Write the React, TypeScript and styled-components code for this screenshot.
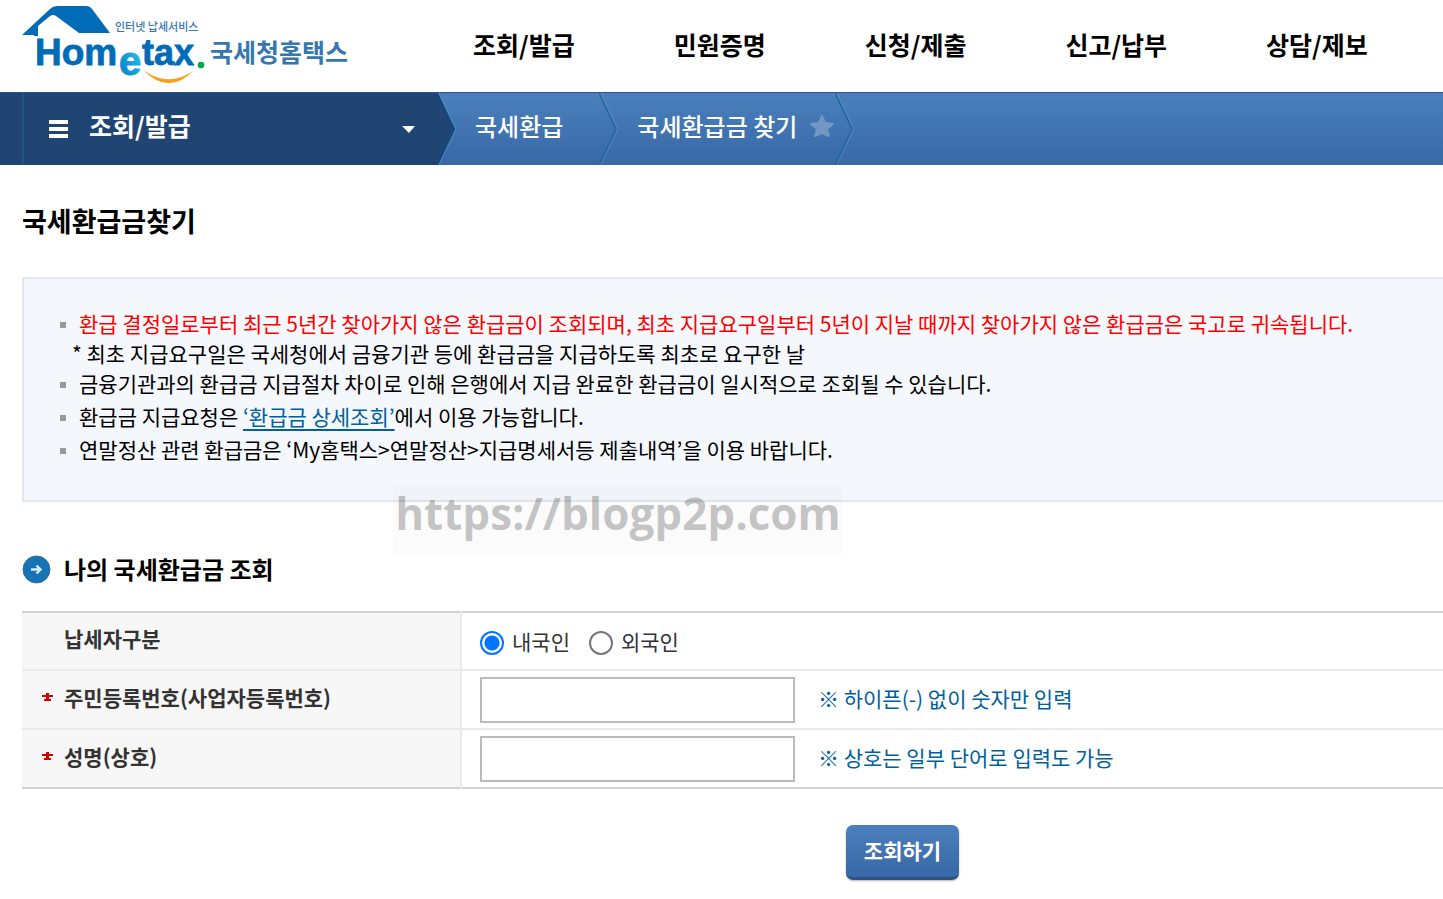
import React from "react";
import styled, { createGlobalStyle } from "styled-components";

const Global = createGlobalStyle`
  *, *::before, *::after { box-sizing: border-box; }
  html, body { margin: 0; background: #fff; }
  body {
    font-family: "Noto Sans CJK KR", sans-serif;
    font-size: 21px;
    line-height: 30px;
    color: #000;
    overflow-x: hidden;
  }
  h1, h2, ul, p { margin: 0; padding: 0; font-weight: inherit; }
  button, input { font-family: inherit; }
`;

const Header = styled.header`
  display: flex;
  height: 92px;
  padding-left: 22px;
`;

const LogoLink = styled.a`
  display: block;
  flex: none;
  width: 428px;
  height: 92px;
`;

const MainNav = styled.nav`
  display: flex;
  flex: 1;
  gap: 99px;
  padding: 24px 0 0 23px;
`;

const NavLink = styled.a`
  color: #000;
  font-size: 25px;
  font-weight: 700;
  line-height: 40px;
  white-space: nowrap;
  text-decoration: none;
`;

const PathBar = styled.nav`
  display: flex;
  height: 73px;
  padding-left: 22px;
  border-top: 1px solid #2a568c;
  background: linear-gradient(90deg, #204573 22px, transparent 22px),
    linear-gradient(#4a80bd, #3868a6);
`;

const MenuToggle = styled.button`
  display: flex;
  align-items: center;
  flex: none;
  width: 415px;
  padding: 0 21px 0 25px;
  border: 0;
  border-left: 2px solid #25518a;
  background: #204573;
  color: #fff;
  font-size: 25px;
  font-weight: 700;
  line-height: 40px;
  text-align: left;
`;

const ToggleText = styled.span`
  flex: 1;
  padding: 0 0 8px 21px;
`;

const Crumb = styled.a<{ $current?: boolean }>`
  display: flex;
  align-items: center;
  gap: 12px;
  padding: 0 ${(p) => (p.$current ? 0 : 36)}px 6px 19px;
  color: #fff;
  font-size: 24px;
  font-weight: 500;
  line-height: 36px;
  white-space: nowrap;
  text-decoration: none;
`;

const ChevronSvg = styled.svg`
  flex: none;
  display: block;
  width: 19px;
  height: 72px;
`;

const Main = styled.main`
  padding: 36px 0 18px 22px;
`;

const PageTitle = styled.h1`
  font-size: 27px;
  font-weight: 700;
  line-height: 40px;
`;

const Notice = styled.section`
  position: relative;
  margin-top: 36px;
  height: 225px;
  padding: 29px 0 0 36px;
  border: 2px solid #e0e7ef;
  border-right: 0;
  background: #f4f7fc;
`;

const NoticeList = styled.ul`
  list-style: none;
`;

const NoticeItem = styled.li<{ $alert?: boolean }>`
  position: relative;
  padding: 0 0 3px 19px;
  line-height: 30px;
  white-space: nowrap;
  color: ${(p) => (p.$alert ? "#f00" : "#000")};
  &::before {
    content: "";
    position: absolute;
    left: 0;
    top: 14px;
    width: 6px;
    height: 6px;
    background: #999;
  }
`;

const NoticeSub = styled.p`
  color: #000;
  margin: 0 0 -3px -7px;
`;

const TextLink = styled.a`
  color: #00609c;
  text-decoration: underline;
  text-underline-offset: 4px;
`;

const Watermark = styled.span`
  position: absolute;
  left: 369px;
  top: 206px;
  width: 450px;
  height: 70px;
  background: rgba(0, 0, 0, 0.015);
  color: rgba(0, 0, 0, 0.23);
  font-family: "Open Sans", sans-serif;
  font-size: 44px;
  font-weight: 700;
  line-height: 56px;
  text-align: center;
  white-space: nowrap;
`;

const SectionTitle = styled.h2`
  display: flex;
  align-items: center;
  gap: 13px;
  margin-top: 47px;
  font-size: 24px;
  font-weight: 700;
  line-height: 40px;
`;

const FormTable = styled.table`
  width: 100%;
  margin-top: 22px;
  border-collapse: collapse;
  border-top: 2px solid #d2d2d2;
  border-bottom: 2px solid #d2d2d2;
`;

const Row = styled.tr`
  height: 58px;
  & + & {
    height: 59px;
    border-top: 2px solid #ebebeb;
  }
`;

const LabelCell = styled.th`
  position: relative;
  width: 439px;
  padding: 0 0 6px 42px;
  border-right: 2px solid #ebebeb;
  background: #f7f7f7;
  color: #333;
  font-weight: 700;
  text-align: left;
`;

const RequiredSvg = styled.svg`
  position: absolute;
  left: 20px;
  top: 21px;
`;

const FieldCell = styled.td`
  padding: 0 0 0 18px;
`;

const FieldLine = styled.div`
  display: flex;
  align-items: center;
`;

const RadioLabel = styled.label`
  display: flex;
  align-items: center;
  gap: 8px;
  margin-right: 19px;
  color: #333;
`;

const Radio = styled.input`
  appearance: none;
  width: 24px;
  height: 24px;
  margin: 4px 0 0;
  border: 2px solid #767676;
  border-radius: 50%;
  background: #fff;
  &:checked {
    border-color: #0075ff;
    background: radial-gradient(circle, #0075ff 7px, #fff 8px);
  }
`;

const TextInput = styled.input`
  width: 315px;
  height: 46px;
  padding: 0 10px;
  border: 2px solid #bbb;
  background: #fff;
  font-size: 21px;
`;

const Hint = styled.span`
  margin-left: 23px;
  padding-bottom: 3px;
  color: #00609c;
`;

const Actions = styled.div`
  display: flex;
  justify-content: center;
  margin-top: 36px;
  padding-left: 340px;
`;

const SubmitButton = styled.button`
  width: 113px;
  height: 55px;
  padding: 0 0 2px;
  border: 0;
  border-bottom: 3px solid #2a5384;
  border-radius: 7px;
  background: linear-gradient(#4c7fbd, #3868a6);
  box-shadow: 0 1px 2px rgba(0, 0, 0, 0.3);
  color: #fff;
  font-size: 21px;
  font-weight: 700;
`;

const Logo = () => (
  <svg width="330" height="92" viewBox="22 0 330 92" role="img" aria-label="Hometax">
    <defs>
      <linearGradient id="e" x1="1" y1="0" x2="0" y2="1">
        <stop offset="0" stopColor="#2cc8f3" />
        <stop offset="1" stopColor="#0079c4" />
      </linearGradient>
    </defs>
    <path d="M22 35L50 9Q53 6 58 6H86Q90 6 92 9L110 33H79L56 16Q53 14 50 16L38 26V36H34V35Z" fill="#006cb8" />
    <g fontFamily="Liberation Sans, sans-serif" fontWeight="700" fill="#006cb8" stroke="#006cb8" strokeWidth=".8">
      <text x="35" y="65" fontSize="37">Hom</text>
      <text x="142" y="65" fontSize="36">tax</text>
    </g>
    <text x="119" y="75" fontFamily="Liberation Sans, sans-serif" fontWeight="700" fontSize="40" fill="url(#e)" stroke="url(#e)">e</text>
    <circle cx="201" cy="65" r="3.300" fill="#00a650" />
    <path d="M143 70Q168 88 193 71Q169 96 143 70Z" fill="#f9a01b" />
    <g fontFamily="Noto Sans CJK KR, sans-serif" fill="#3677b0">
      <text x="115" y="31" fontSize="11" fontWeight="500">인터넷 납세서비스</text>
      <text x="210" y="62" fontSize="25" fontWeight="700">국세청홈택스</text>
    </g>
  </svg>
);

const Chevron = ({ filled }: { filled?: boolean }) => (
  <ChevronSvg viewBox="0 0 19 72" aria-hidden="true">
    {filled && <path d="M0 0L17 36L0 72Z" fill="#204573" />}
    <path d="M2 0L19 36L2 72" fill="none" stroke="#6c9bcd" strokeOpacity=".5" />
    <path d="M0 0L17 36L0 72" fill="none" stroke={filled ? "#0d4a7d" : "#23689f"} strokeWidth={filled ? 2 : 1.5} />
  </ChevronSvg>
);

const Required = () => (
  <RequiredSvg width="11" height="11" viewBox="0 0 11 11" aria-hidden="true">
    <path d="M4 1H7V3H11V5H7V7H9V9H2V7H4V5H0V3H4Z" fill="#d40000" />
  </RequiredSvg>
);

const menus = ["조회/발급", "민원증명", "신청/제출", "신고/납부", "상담/제보"];

export default function App() {
  return (
    <>
      <Global />
      <Header>
        <LogoLink href="#"><Logo /></LogoLink>
        <MainNav>
          {menus.map((m) => <NavLink href="#" key={m}>{m}</NavLink>)}
        </MainNav>
      </Header>
      <PathBar>
        <MenuToggle type="button">
          <svg width="19" height="20" viewBox="0 0 19 20" aria-hidden="true">
            <path d="M0 1H19V5H0ZM0 8H19V12H0ZM0 15H19V19H0Z" fill="#fff" />
          </svg>
          <ToggleText>조회/발급</ToggleText>
          <svg width="15" height="10" viewBox="0 0 15 10" aria-hidden="true">
            <path d="M1 2H14L8 9Z" fill="#fff" />
          </svg>
        </MenuToggle>
        <Chevron filled />
        <Crumb href="#">국세환급</Crumb>
        <Chevron />
        <Crumb href="#" $current>
          국세환급금 찾기
          <svg width="26" height="24" viewBox="0 0 26 24" aria-hidden="true">
            <path d="M13 2L16 9L24 10L18 15L20 22L13 19L6 22L8 15L2 10L10 9Z" fill="#7297c2" stroke="#7297c2" strokeWidth="2" strokeLinejoin="round" />
          </svg>
        </Crumb>
        <Chevron />
      </PathBar>
      <Main>
        <PageTitle>국세환급금찾기</PageTitle>
        <Notice>
          <NoticeList>
            <NoticeItem $alert>
              환급 결정일로부터 최근 5년간 찾아가지 않은 환급금이 조회되며, 최초 지급요구일부터 5년이 지날 때까지 찾아가지 않은 환급금은 국고로 귀속됩니다.
              <NoticeSub>* 최초 지급요구일은 국세청에서 금융기관 등에 환급금을 지급하도록 최초로 요구한 날</NoticeSub>
            </NoticeItem>
            <NoticeItem>금융기관과의 환급금 지급절차 차이로 인해 은행에서 지급 완료한 환급금이 일시적으로 조회될 수 있습니다.</NoticeItem>
            <NoticeItem>환급금 지급요청은 <TextLink href="#">‘환급금 상세조회’</TextLink>에서 이용 가능합니다.</NoticeItem>
            <NoticeItem>연말정산 관련 환급금은 ‘My홈택스&gt;연말정산&gt;지급명세서등 제출내역’을 이용 바랍니다.</NoticeItem>
          </NoticeList>
          <Watermark>https://blogp2p.com</Watermark>
        </Notice>
        <SectionTitle>
          <svg width="29" height="29" viewBox="0 0 29 29" aria-hidden="true">
            <circle cx="14.500" cy="14.500" r="13.500" fill="#1673b5" stroke="#3a6f9c" />
            <path d="M9 14.500H18M14.500 10.500L18.500 14.500L14.500 18.500" fill="none" stroke="#dcecf8" strokeWidth="2.400" />
          </svg>
          나의 국세환급금 조회
        </SectionTitle>
        <form onSubmit={(e) => e.preventDefault()}>
          <FormTable>
            <tbody>
              <Row>
                <LabelCell scope="row">납세자구분</LabelCell>
                <FieldCell>
                  <FieldLine>
                    <RadioLabel><Radio type="radio" name="kind" defaultChecked />내국인</RadioLabel>
                    <RadioLabel><Radio type="radio" name="kind" />외국인</RadioLabel>
                  </FieldLine>
                </FieldCell>
              </Row>
              <Row>
                <LabelCell scope="row"><Required /><label htmlFor="regno">주민등록번호(사업자등록번호)</label></LabelCell>
                <FieldCell>
                  <FieldLine>
                    <TextInput id="regno" type="text" />
                    <Hint>※ 하이픈(-) 없이 숫자만 입력</Hint>
                  </FieldLine>
                </FieldCell>
              </Row>
              <Row>
                <LabelCell scope="row"><Required /><label htmlFor="name">성명(상호)</label></LabelCell>
                <FieldCell>
                  <FieldLine>
                    <TextInput id="name" type="text" />
                    <Hint>※ 상호는 일부 단어로 입력도 가능</Hint>
                  </FieldLine>
                </FieldCell>
              </Row>
            </tbody>
          </FormTable>
          <Actions><SubmitButton type="submit">조회하기</SubmitButton></Actions>
        </form>
      </Main>
    </>
  );
}
